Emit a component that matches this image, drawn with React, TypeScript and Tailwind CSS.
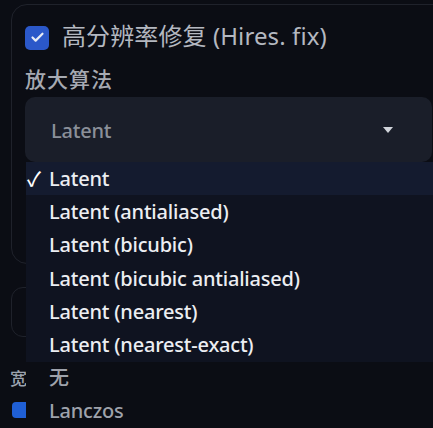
import { Check } from 'lucide-react';

const options = [
  'Latent',
  'Latent (antialiased)',
  'Latent (bicubic)',
  'Latent (bicubic antialiased)',
  'Latent (nearest)',
  'Latent (nearest-exact)',
];

const font = { fontFamily: '"Noto Sans", "Noto Sans CJK SC", sans-serif' };

export default function App() {
  return (
    <div
      className="relative w-[433px] h-[428px] overflow-hidden bg-[#0b0d14] text-[#e5e7eb]"
      style={font}
    >
      <div className="pt-[4px] pl-[11px]">
        {/* Hires fix panel */}
        <div className="w-[460px] h-[260px] rounded-[16px] border border-[#1f222b] pt-[20px] pl-[13px]">
          <div className="flex items-center h-[25px] gap-[13px]">
            <div className="w-[24px] h-[24px] rounded-[5px] bg-[#2b58c9] flex items-center justify-center">
              <Check className="w-[15px] h-[15px] text-[#e8ecf5]" strokeWidth={3.5} />
            </div>
            <span className="-mt-[4px] text-[24px] leading-none text-[#b4b8c0] tracking-[0.1px]">
              高分辨率修复 (Hires. fix)
            </span>
          </div>
          <div className="mt-[15px] h-[28px] leading-[28px] text-[21px] font-medium text-[#a6aab2] tracking-[1px]">
            放大算法
          </div>
          <div className="mt-[4px] w-[407px] h-[65px] rounded-[10px] bg-[#1a1e29] flex items-center justify-between pl-[26px] pr-[39px]">
            <span className="pt-[3px] text-[20px] font-medium tracking-[-0.2px] text-[#8b9099]">Latent</span>
            <span className="w-0 h-0 border-l-[5px] border-r-[5px] border-t-[6px] border-l-transparent border-r-transparent border-t-[#d1d5db]" />
          </div>
        </div>

        {/* Width panel */}
        <div className="mt-[23px] w-[460px] h-[50px] rounded-[12px] border border-[#1f222b]" />

        <div className="mt-[32px] -ml-[1px] text-[17px] leading-[19px] font-medium text-[#9ca3af]">宽度</div>
        <div className="mt-[14px] ml-[1px] w-[20px] h-[16px] rounded-[4px] bg-[#1f5fd6]" />
      </div>

      {/* Open dropdown menu */}
      <div className="absolute left-[26px] top-[162px] right-0">
        <ul className="bg-[#0f1320]">
          {options.map((o, i) => (
            <li
              key={o}
              className={`relative h-[33.3px] flex items-center pl-[23px] text-[20px] font-medium tracking-[-0.2px] text-[#eceef2] ${i === 0 ? 'bg-[#141b2f]' : ''}`}
            >
              {i === 0 && (
                <span className="absolute left-[1px] text-[20px] text-white">✓</span>
              )}
              {o}
            </li>
          ))}
        </ul>
        <ul className="bg-[#0b0d14]">
          <li className="h-[33px] flex items-center pl-[23px] text-[20px] font-medium text-[#9ea2ab]">无</li>
          <li className="h-[33px] flex items-center pl-[23px] text-[20px] font-medium tracking-[-0.2px] text-[#9ea2ab]">Lanczos</li>
        </ul>
      </div>
    </div>
  );
}
